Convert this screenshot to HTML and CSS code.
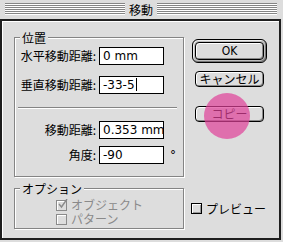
FILE: index.html
```html
<!DOCTYPE html>
<html lang="ja">
<head>
    <meta charset="UTF-8">
    <title>移動</title>
    <link rel="stylesheet" href="styles.css">
</head>
<body>
    <div class="window">
        <!-- タイトルバー -->
        <div class="titlebar">
            <span class="stripes"></span>
            <span class="title">移動</span>
            <span class="stripes"></span>
        </div>

        <div class="content">
            <!-- 位置 -->
            <div class="group position">
                <div class="group-title">位置</div>
                <div class="row first">
                    <span class="label">水平移動距離:</span>
                    <span class="field">0 mm</span>
                </div>
                <div class="row second">
                    <span class="label">垂直移動距離:</span>
                    <span class="field">-33-5<span class="caret"></span></span>
                </div>
                <div class="separator"></div>
                <div class="row third">
                    <span class="label">移動距離:</span>
                    <span class="field">0.353 mm</span>
                </div>
                <div class="row fourth">
                    <span class="label">角度:</span>
                    <span class="field">-90</span>
                    <span class="unit">°</span>
                </div>
            </div>

            <!-- ボタン -->
            <div class="buttons">
                <div class="default-ring">
                    <div class="button ok">OK</div>
                </div>
                <div class="button cancel">キャンセル</div>
                <div class="button copy">コピー</div>
            </div>

            <!-- オプション -->
            <div class="group options">
                <div class="group-title">オプション</div>
                <div class="checks">
                    <div class="check disabled">
                        <span class="box">
                            <svg width="11" height="11" viewBox="0 0 11 11"><polyline points="2,5 4.5,8 10,0" fill="none" stroke="#8a8a8a" stroke-width="1.4"/></svg>
                        </span>
                        <span>オブジェクト</span>
                    </div>
                    <div class="check disabled">
                        <span class="box"></span>
                        <span>パターン</span>
                    </div>
                </div>
            </div>

            <div class="check preview">
                <span class="box"></span>
                <span>プレビュー</span>
            </div>
        </div>

        <!-- 強調マーク -->
        <div class="spot"></div>
    </div>
</body>
</html>
```

FILE: styles.css
```css
body {
    margin: 0;
    background: #dddddd;
}
.window {
    position: relative;
    width: 283px;
    height: 242px;
    display: flex;
    flex-direction: column;
    background: #dddddd;
    font-family: "Noto Sans CJK JP", sans-serif;
    font-size: 12px;
    color: #000;
    overflow: hidden;
}

/* タイトルバー */
.titlebar {
    height: 19px;
    display: flex;
    align-items: flex-start;
    padding: 0 6px 0 5px;
}
.stripes {
    flex: 1;
    height: 12px;
    margin-top: 3px;
    background: repeating-linear-gradient(to bottom, #858585 0 1px, #ffffff 1px 2px);
}
.title {
    padding: 0 4px;
    line-height: 19px;
}

.content {
    flex: 1;
    margin: 0 2px 2px 0;
    border: 2px solid #1e1e1e;
    box-shadow: inset 1px 1px 0 #fff;
    display: grid;
    grid-template-columns: 170px 1fr;
    column-gap: 8px;
    row-gap: 11px;
    align-content: start;
    padding: 16px 0 0 12px;
}

/* グループ枠 */
.group {
    border: 1px solid #848484;
    box-shadow: 1px 1px 0 #fff, inset 1px 1px 0 #fff;
}
.group-title {
    width: fit-content;
    margin: -8px 0 0 5px;
    padding: 0 2px;
    line-height: 15px;
    background: #dddddd;
}
.position {
    padding-bottom: 12px;
}
.row {
    display: grid;
    grid-template-columns: 81px 65px auto;
    column-gap: 3px;
    align-items: center;
    height: 18px;
}
.row.first { margin-top: 2px; }
.row.second { margin-top: 11px; }
.row.third { margin-top: 12px; }
.row.fourth { margin-top: 7px; }
.label {
    text-align: right;
    white-space: nowrap;
    line-height: 18px;
}
.field {
    height: 18px;
    box-sizing: border-box;
    border: 1px solid #000;
    background: #fff;
    padding: 0 3px;
    font-family: "DejaVu Sans", sans-serif;
    font-size: 12px;
    line-height: 16px;
    white-space: nowrap;
    overflow: hidden;
}
.caret {
    display: inline-block;
    width: 1px;
    height: 13px;
    margin-left: 1px;
    background: #000;
    vertical-align: -2px;
}
.unit {
    margin-left: 3px;
    line-height: 18px;
    font-family: "DejaVu Sans", sans-serif;
}
.separator {
    height: 1px;
    margin: 13px 6px 0 3px;
    background: #848484;
    border-bottom: 1px solid #fff;
}

/* ボタン */
.buttons {
    display: flex;
    flex-direction: column;
    align-items: flex-start;
    padding-top: 2px;
}
.default-ring {
    border: 1px solid #000;
    border-radius: 6px;
    padding: 2px;
    background: #bdbdbd;
    box-shadow: inset 1px 1px 0 #eeeeee, inset -1px -1px 0 #777;
}
.button {
    width: 69px;
    height: 16px;
    box-sizing: border-box;
    border: 1px solid #000;
    border-radius: 4px;
    background: #dddddd;
    box-shadow: inset 1px 1px 0 #fff, inset -1px -1px 0 #8a8a8a;
    text-align: center;
    line-height: 14px;
}
.button.ok {
    height: 18px;
    line-height: 16px;
    font-family: "DejaVu Sans Condensed", "DejaVu Sans", sans-serif;
}
.button.cancel {
    margin: 8px 0 0 3px;
}
.button.copy {
    margin: 19px 0 0 3px;
}

/* チェックボックス */
.checks {
    margin-top: 2px;
    padding: 0 0 2px 41px;
}
.check {
    display: flex;
    align-items: center;
    gap: 4px;
    height: 14px;
    line-height: 14px;
    white-space: nowrap;
}
.check.disabled {
    color: #8a8a8a;
}
.box {
    width: 11px;
    height: 11px;
    box-sizing: border-box;
    border: 1px solid #8a8a8a;
    background: #dddddd;
    box-shadow: inset 1px 1px 0 #fff;
    position: relative;
}
.box svg {
    position: absolute;
    left: 0;
    top: -2px;
}
.preview {
    align-self: center;
    margin-left: -1px;
}
.preview .box {
    border-color: #000;
    box-shadow: inset 1px 1px 0 #fff, inset -1px -1px 0 #999;
}

.spot {
    position: absolute;
    left: 204px;
    top: 93px;
    width: 46px;
    height: 46px;
    border-radius: 50%;
    background: rgba(224, 64, 152, 0.7);
}
```
